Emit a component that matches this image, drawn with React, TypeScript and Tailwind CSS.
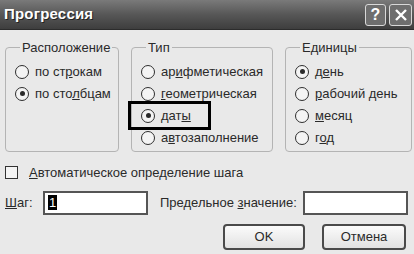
import React from "react";

const font = { fontFamily: '"Liberation Sans", Arial, sans-serif' };

function Radio({ label, u, checked }: { label: string; u: number; checked?: boolean }) {
  return (
    <div className="flex items-center gap-[6px] h-[22px]">
      <span className="flex items-center justify-center w-[14px] h-[14px] rounded-full border-[1.5px] border-[#2e2e2e] bg-[#f4f4f4]">
        {checked && <span className="w-[5px] h-[5px] rounded-full bg-[#2a2a2a]" />}
      </span>
      <span className="text-[13px] text-[#2a2a2a] whitespace-nowrap">
        {label.slice(0, u)}
        <span className="underline">{label.slice(u, u + 1)}</span>
        {label.slice(u + 1)}
      </span>
    </div>
  );
}

function Group({ title, width, children }: { title: string; width: string; children: React.ReactNode }) {
  return (
    <fieldset className={`${width} h-[114px] border border-[#b4b4b4] rounded-[4px] pl-[9px] pt-[3px]`}>
      <legend className="ml-[5px] px-[2px] text-[13px] text-[#2a2a2a]">{title}</legend>
      {children}
    </fieldset>
  );
}

export default function App() {
  return (
    <div className="w-[414px] h-[254px] overflow-hidden bg-[#e9e9e9]" style={font}>
      <div className="flex items-center justify-between h-[30px] pl-[4px] pr-[2px] bg-gradient-to-b from-[#7a7a7a] via-[#575757] to-[#3e3e3e] border-b border-[#2c2c2c]">
        <span className="text-[15px] font-bold text-white tracking-[0.2px] [text-shadow:1px_1px_0_#222]">
          Прогрессия
        </span>
        <div className="flex gap-[3px]">
          <div className="flex items-center justify-center w-[21px] h-[22px] rounded-[3px] border border-[#d8d8d8] bg-[#6e6e6e] text-white text-[16px] font-bold">
            ?
          </div>
          <div className="flex items-center justify-center w-[23px] h-[22px] rounded-[3px] border border-[#d8d8d8] bg-[#6e6e6e]">
            <svg width="14" height="14" viewBox="0 0 14 14">
              <path d="M2 2 L12 12 M12 2 L2 12" stroke="#fff" strokeWidth="2.4" />
            </svg>
          </div>
        </div>
      </div>

      <div className="flex gap-[12px] pl-[5px] pt-[8px]">
        <Group title="Расположение" width="w-[114px]">
          <Radio label="по строкам" u={5} />
          <Radio label="по столбцам" u={6} checked />
        </Group>
        <Group title="Тип" width="w-[142px]">
          <Radio label="арифметическая" u={2} />
          <Radio label="геометрическая" u={0} />
          <div className="relative">
            <Radio label="даты" u={3} checked />
            <div className="absolute left-[-13px] top-[-4px] w-[83px] h-[29px] border-[3px] border-black" />
          </div>
          <Radio label="автозаполнение" u={1} />
        </Group>
        <Group title="Единицы" width="w-[127px]">
          <Radio label="день" u={1} checked />
          <Radio label="рабочий день" u={0} />
          <Radio label="месяц" u={0} />
          <Radio label="год" u={1} />
        </Group>
      </div>

      <div className="flex items-center gap-[11px] pl-[5px] mt-[11px] text-[13px] text-[#2a2a2a]">
        <span className="w-[13px] h-[13px] border-[1.5px] border-[#333] bg-[#f4f4f4]" />
        <span>
          <span className="underline">А</span>втоматическое определение шага
        </span>
      </div>

      <div className="flex items-center pl-[5px] mt-[8px] text-[13px] text-[#2a2a2a]">
        <span className="w-[38px]">
          <span className="underline">Ш</span>аг:
        </span>
        <div className="flex items-center w-[105px] h-[24px] border-2 border-[#555] bg-white pl-[3px]">
          <span className="bg-black text-white leading-[15px] px-[1px]">1</span>
        </div>
        <span className="ml-[12px] w-[143px]">
          Предельное <span className="underline">з</span>начение:
        </span>
        <div className="w-[105px] h-[24px] border-2 border-[#555] bg-white" />
      </div>

      <div className="flex justify-end gap-[17px] pr-[8px] mt-[9px] text-[13px] text-[#2a2a2a]">
        <div className="flex items-center justify-center w-[82px] h-[26px] rounded-[4px] border-2 border-[#4a4a4a] bg-gradient-to-b from-[#fbfbfb] to-[#e2e2e2]">
          OK
        </div>
        <div className="flex items-center justify-center w-[84px] h-[26px] rounded-[4px] border-2 border-[#4a4a4a] bg-gradient-to-b from-[#fbfbfb] to-[#e2e2e2]">
          Отмена
        </div>
      </div>
    </div>
  );
}
